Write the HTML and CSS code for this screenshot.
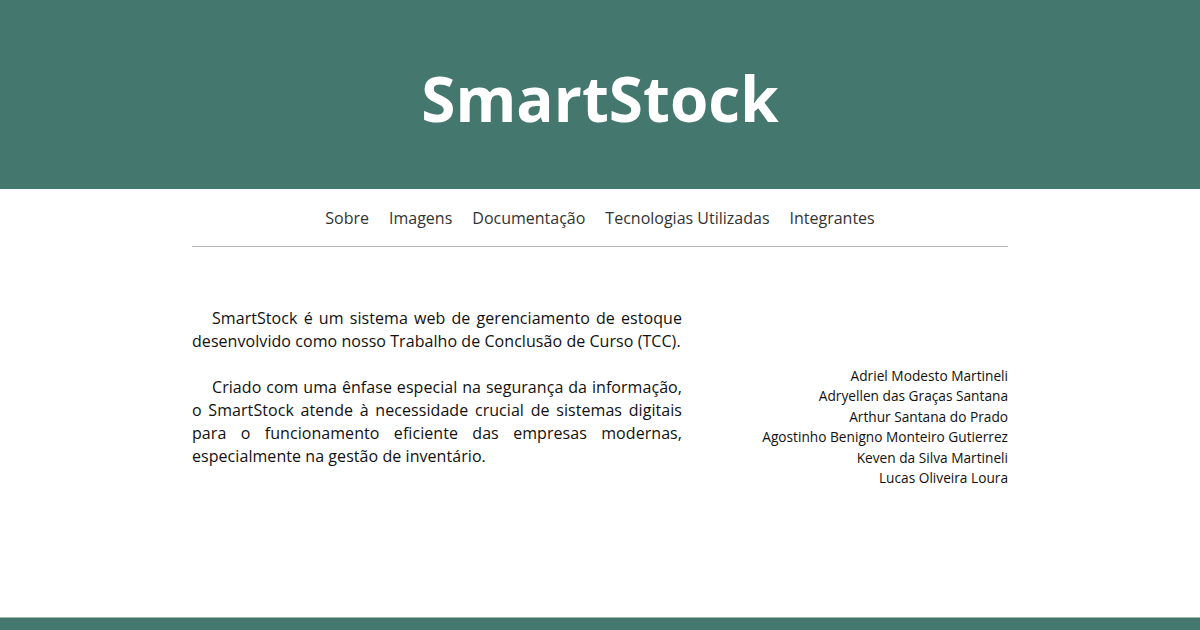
FILE: index.html
```html
<!DOCTYPE html>
<html lang="pt-BR">
<head>
<meta charset="utf-8">
<title>SmartStock</title>
<link rel="stylesheet" href="styles.css">
</head>
<body>
<header class="hero">
  <h1 class="brand">SmartStock</h1>
</header>
<div class="wrap">
  <nav class="nav">
    <a href="#">Sobre</a>
    <a href="#">Imagens</a>
    <a href="#">Documentação</a>
    <a href="#">Tecnologias Utilizadas</a>
    <a href="#">Integrantes</a>
  </nav>
  <main class="about">
    <div class="text">
      <p>SmartStock é um sistema web de gerenciamento de estoque desenvolvido como nosso Trabalho de Conclusão de Curso (TCC).</p>
      <p>Criado com uma ênfase especial na segurança da informação, o SmartStock atende à necessidade crucial de sistemas digitais para o funcionamento eficiente das empresas modernas, especialmente na gestão de inventário.</p>
    </div>
    <ul class="members">
      <li>Adriel Modesto Martineli</li>
      <li>Adryellen das Graças Santana</li>
      <li>Arthur Santana do Prado</li>
      <li>Agostinho Benigno Monteiro Gutierrez</li>
      <li>Keven da Silva Martineli</li>
      <li>Lucas Oliveira Loura</li>
    </ul>
  </main>
</div>
<footer class="foot"></footer>
</body>
</html>
```
FILE: styles.css
```css
* { box-sizing: border-box; }
html, body { margin: 0; padding: 0; }
body {
  font-family: "Open Sans", "Liberation Sans", sans-serif;
  color: #111;
  background: #fff;
  min-height: 100vh;
  display: flex;
  flex-direction: column;
}
.hero {
  background: #44776d;
  height: 189px;
  display: flex;
  align-items: center;
  justify-content: center;
}
.brand {
  margin: 0;
  color: #fff;
  font-size: 62px;
  font-weight: 700;
  letter-spacing: 0;
  line-height: 1;
  padding-top: 6px;
}
.wrap {
  width: 816px;
  margin: 0 auto;
  flex: 1;
}
.nav {
  display: flex;
  justify-content: center;
  gap: 20px;
  padding: 18px 0 17px;
  border-bottom: 1px solid #b4b4b4;
}
.nav a {
  color: #333;
  text-decoration: none;
  font-size: 16px;
  line-height: 22px;
}
.about {
  display: flex;
  justify-content: space-between;
  align-items: flex-start;
  padding-top: 60px;
}
.text {
  width: 490px;
  font-size: 16px;
  letter-spacing: 0.06px;
  line-height: 23px;
  text-align: justify;
}
.text p {
  margin: 0 0 23px;
  text-indent: 20px;
}
.members {
  list-style: none;
  margin: 59px 0 0;
  padding: 0;
  text-align: right;
  font-size: 13.7px;
  line-height: 20.4px;
}
.foot {
  height: 13px;
  background: #44776d;
  border-top: 1px solid #9db7b1;
}
```
